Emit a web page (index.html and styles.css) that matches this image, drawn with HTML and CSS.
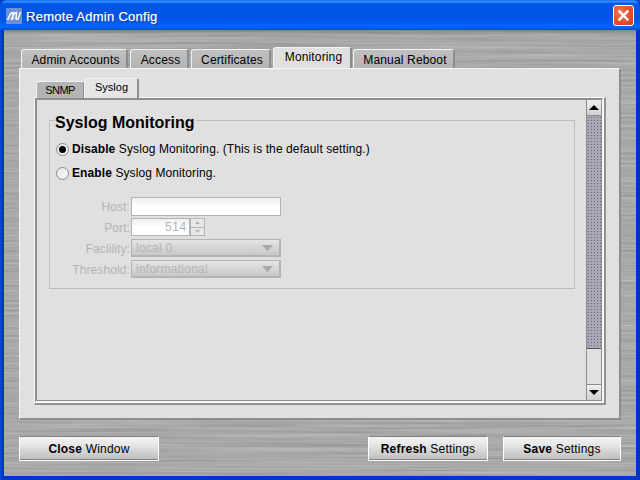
FILE: index.html
```html
<!DOCTYPE html>
<html lang="en">
<head>
<meta charset="utf-8">
<title>Remote Admin Config</title>
<link rel="stylesheet" href="styles.css">
</head>
<body>
<div class="window">
  <header class="titlebar">
    <span class="logo">
      <svg width="16" height="16" viewBox="0 0 16 16"><path d="M1.500 12 L4.500 6 Q5.500 4.500 7 4.500 L7 11.500 M5 12 L8 6 Q9 4.500 10.500 4.500 L10 10.500 Q10.500 12 12 11 L14.500 4" fill="none" stroke="#fff" stroke-width="1.500"/></svg>
    </span>
    <span class="title">Remote Admin Config</span>
    <button class="close" aria-label="Close">
      <svg width="13" height="13" viewBox="0 0 13 13"><path d="M2.500 2.500 L10.500 10.500 M10.500 2.500 L2.500 10.500" stroke="#fff" stroke-width="2.400" stroke-linecap="square"/></svg>
    </button>
  </header>
  <main class="client">
    <svg class="metal" width="632" height="446" aria-hidden="true">
      <defs>
        <filter id="brushed" x="0" y="0" width="100%" height="100%" color-interpolation-filters="sRGB">
          <feTurbulence type="fractalNoise" baseFrequency="0.005 0.4" numOctaves="3" seed="7"/>
          <feColorMatrix type="matrix" values="0.2 0 0 0 0.56  0.2 0 0 0 0.56  0.2 0 0 0 0.56  0 0 0 0 1"/>
        </filter>
        <linearGradient id="topshade" x1="0" y1="0" x2="0" y2="1">
          <stop offset="0" stop-color="#000" stop-opacity=".22"/>
          <stop offset="1" stop-color="#000" stop-opacity="0"/>
        </linearGradient>
      </defs>
      <rect width="632" height="446" filter="url(#brushed)"/>
      <rect width="632" height="5" fill="url(#topshade)"/>
    </svg>
    <nav class="tabs">
      <span class="tab t1">Admin Accounts</span>
      <span class="tab t2">Access</span>
      <span class="tab t3">Certificates</span>
      <span class="tab active t4">Monitoring</span>
      <span class="tab t5">Manual Reboot</span>
    </nav>
    <section class="panel">
      <nav class="subtabs">
        <span class="subtab">SNMP</span>
        <span class="subtab active">Syslog</span>
      </nav>
      <div class="content">
        <div class="well">
          <div class="frame">
            <div class="scrollarea">
              <fieldset class="group">
                <legend>Syslog Monitoring</legend>
                <div class="radio first"><span class="dot on"></span><span><b>Disable</b> Syslog Monitoring. (This is the default setting.)</span></div>
                <div class="radio"><span class="dot"></span><span><b>Enable</b> Syslog Monitoring.</span></div>
                <div class="form">
                  <div class="row"><label>Host:</label><span class="input wide"></span></div>
                  <div class="row"><label>Port:</label><span class="input port">514</span>
                    <span class="spin"><i><svg width="5" height="3" viewBox="0 0 5 3"><path d="M2.500 0 L5 3 H0Z" fill="#b4b4b4"/></svg></i><i><svg width="5" height="3" viewBox="0 0 5 3"><path d="M0 0 H5 L2.500 3Z" fill="#b4b4b4"/></svg></i></span></div>
                  <div class="row"><label>Faclility:</label><span class="select">local 0<svg width="11" height="6" viewBox="0 0 11 6"><path d="M0 0 H11 L5.500 6Z" fill="#a8a8a8"/></svg></span></div>
                  <div class="row"><label>Threshold:</label><span class="select">informational<svg width="11" height="6" viewBox="0 0 11 6"><path d="M0 0 H11 L5.500 6Z" fill="#a8a8a8"/></svg></span></div>
                </div>
              </fieldset>
            </div>
            <div class="scrollbar">
              <span class="arrow"><svg width="10" height="5" viewBox="0 0 10 5"><path d="M5 0 L10 5 H0Z" fill="#000"/></svg></span>
              <span class="thumb"></span>
              <span class="track"></span>
              <span class="arrow"><svg width="10" height="5" viewBox="0 0 10 5"><path d="M0 0 H10 L5 5Z" fill="#000"/></svg></span>
            </div>
          </div>
        </div>
      </div>
    </section>
    <footer class="actions">
      <button class="btn b-close"><b>Close</b> Window</button>
      <span class="spacer"></span>
      <button class="btn b-refresh"><b>Refresh</b> Settings</button>
      <button class="btn b-save"><b>Save</b> Settings</button>
    </footer>
  </main>
</div>
</body>
</html>
```
FILE: styles.css
```css
* { box-sizing: border-box; }
html, body { margin: 0; padding: 0; }
body { width: 640px; height: 480px; overflow: hidden; font-family: "Liberation Sans", Arial, sans-serif; font-size: 12px; color: #000; background: #0a3fd0; }
.window {
  width: 640px; height: 480px; display: flex; flex-direction: column;
  background: linear-gradient(90deg, #0a50e8, #0036c4 2px, #0036c4 638px, #0a2fa8);
  border-radius: 7px 7px 0 0; overflow: hidden;
}
.titlebar {
  height: 30px; flex: none; display: flex; align-items: center; padding: 2px 6px 0 6px;
  background: linear-gradient(180deg, #0058e6 0, #3a93ff 1px, #288eff 2px, #0f60ec 3px, #0055e4 5px, #0054e3 16px, #0058ea 22px, #0068f6 26px, #0060f0 28px, #0048d0 30px);
}
.logo { width: 16px; height: 16px; margin-right: 4px; background: #6d8fd8; display: block; }
.logo svg { display: block; }
.title { flex: 1; color: #fff; font-size: 13px; letter-spacing: .27px; -webkit-text-stroke: .25px #fff; text-shadow: 1px 1px 0 #0f2f9a; }
.close {
  width: 21px; height: 21px; margin-top: -2px; padding: 0; display: flex; align-items: center; justify-content: center;
  border: 1px solid #fff; border-radius: 3px;
  background: radial-gradient(circle at 35% 35%, #ee7a55, #e0502c 55%, #c83c14);
}
.close svg { display: block; }
.client {
  flex: 1; margin: 0 4px 4px; padding: 17px 15px 0 15px; min-height: 0;
  display: flex; flex-direction: column; position: relative;
  background-color: #a9a9a9;
}
.metal { position: absolute; left: 0; top: 0; display: block; }
.tabs, .panel, .actions { position: relative; }
.tabs { display: flex; align-items: flex-end; height: 21px; padding-left: 2px; z-index: 1; }
.tab {
  height: 19px; margin-right: 2px; display: flex; align-items: center; justify-content: center;
  background: linear-gradient(180deg, #c0c0c0, #b4b4b4); letter-spacing: .15px; line-height: 1;
  border-top: 1px solid #f2f2f2; border-left: 1px solid #f2f2f2; border-right: 2px solid #8c8c8c; border-radius: 3px 3px 0 0;
  padding: 2px 0 0 3px;
}
.tab.active { height: 21px; background: #e0e0e0; padding: 0 0 3px 3px; margin-right: 1px; }
.t1 { width: 107px; } .t2 { width: 59px; } .t3 { width: 80px; } .t4 { width: 79px; } .t5 { width: 102px; }
.panel {
  height: 352px; flex: none; display: flex; flex-direction: column; padding: 10px 13px 13px 14px;
  background: #e0e0e0; border-top: 1px solid #f6f6f6; border-left: 1px solid #f6f6f6;
  border-right: 2px solid #8e8e8e; border-bottom: 2px solid #8e8e8e;
}
.subtabs { display: flex; align-items: flex-end; height: 19px; padding-left: 2px; position: relative; z-index: 1; margin-bottom: -1px; }
.subtab {
  height: 17px; width: 48px; display: flex; align-items: center; justify-content: center; font-size: 11px; line-height: 1; letter-spacing: -.6px;
  background: #b4b4b4; border-top: 1px solid #f2f2f2; border-left: 1px solid #f2f2f2; border-right: 1px solid #8c8c8c; border-radius: 3px 3px 0 0;
}
.subtab.active { height: 20px; width: 55px; background: #e6e6e6; border-right: 2px solid #8c8c8c; letter-spacing: 0; padding: 0 0 2px 1px; }
.content {
  flex: 1; min-height: 0; display: flex; background: #e0e0e0;
  border-style: solid; border-width: 1px 2px 2px 1px; border-color: #f8f8f8 #939393 #939393 #f8f8f8;
}
.well {
  flex: 1; min-width: 0; display: flex;
  border-style: solid; border-width: 1px 2px 2px 1px; border-color: #8e8e8e #f8f8f8 #f8f8f8 #8e8e8e;
}
.frame { flex: 1; min-width: 0; display: flex; border: 1px solid #8e8e8e; }
.scrollarea { flex: 1; min-width: 0; padding: 9px 0 0 12px; }
.group { margin: 0; padding: 0 0 0 6px; height: 180px; width: 526px; border: 1px solid #bdbdbd; min-width: 0; }
.group legend { padding: 5px 1px 0 0; margin-left: -1px; font-size: 16px; line-height: 18px; font-weight: 700; }
.radio { display: flex; align-items: center; height: 24px; gap: 3px; font-size: 12px; letter-spacing: .1px; }
.radio.first { margin-top: 5px; }
.radio b { font-weight: 700; }
.dot { width: 13px; height: 13px; border: 1px solid #8b8b8b; border-radius: 50%; background: linear-gradient(135deg, #e4e4e4, #fafafa); flex: none; display: flex; align-items: center; justify-content: center; }
.dot.on::after { content: ""; width: 7px; height: 7px; border-radius: 50%; background: #000; }
.form { margin-top: 12px; display: flex; flex-direction: column; gap: 1px; }
.row { display: flex; align-items: center; height: 20px; color: #b4b4b4; letter-spacing: .1px; }
.row label { width: 74px; text-align: right; }
.input { align-self: flex-start; border: 1px solid #b4b4b4; height: 19px; background: linear-gradient(180deg, #eee, #fff 50%); margin-left: 1px; display: flex; align-items: center; justify-content: flex-end; padding-right: 2px; }
.wide { width: 150px; }
.port { width: 59px; height: 18px; letter-spacing: .7px; }
.spin { align-self: flex-start; display: flex; flex-direction: column; width: 15px; height: 18px; border: 1px solid #b4b4b4; }
.spin i { flex: 1; display: flex; align-items: center; justify-content: center; background: #e8e8e8; }
.spin i + i { border-top: 1px solid #b4b4b4; }
.spin svg { display: block; }
.select { align-self: flex-start; width: 150px; height: 18px; margin-left: 1px; display: flex; align-items: center; justify-content: space-between; padding: 0 6px 0 4px; background: linear-gradient(180deg, #e4e4e4, #c8c8c8); border: 1px solid #b4b4b4; border-right-width: 2px; border-bottom-width: 2px; letter-spacing: .25px; }
.scrollbar { width: 15px; flex: none; display: flex; flex-direction: column; border-left: 1px solid #8c8c8c; background: #e0e0e0; }
.arrow { height: 16px; flex: none; display: flex; align-items: center; justify-content: center; background: linear-gradient(180deg, #f0f0f0, #d0d0d0); border-bottom: 1px solid #8c8c8c; }
.arrow:last-child { border-top: 1px solid #8c8c8c; border-bottom: 0; }
.arrow svg { display: block; }
.thumb { height: 233px; flex: none; border-bottom: 1px solid #555; background-color: #a8a8b8; background-image: radial-gradient(circle, #6a6a80 .7px, transparent .8px); background-size: 3px 3px; }
.track { flex: 1; }
.actions { display: flex; align-items: flex-start; padding-top: 16px; }
.spacer { flex: 1; }
.btn {
  height: 25px; padding: 0; font: 12px "Liberation Sans", Arial, sans-serif; letter-spacing: .2px; color: #000;
  background: linear-gradient(180deg, #f4f4f4, #e8e8e8 30%, #bcbcbc);
  border: 1px solid #fff; border-top-color: #808080; box-shadow: inset 0 -1px 0 #808080;
}
.b-close { width: 140px; }
.b-refresh { width: 120px; }
.b-save { width: 118px; margin-left: 15px; }
```
